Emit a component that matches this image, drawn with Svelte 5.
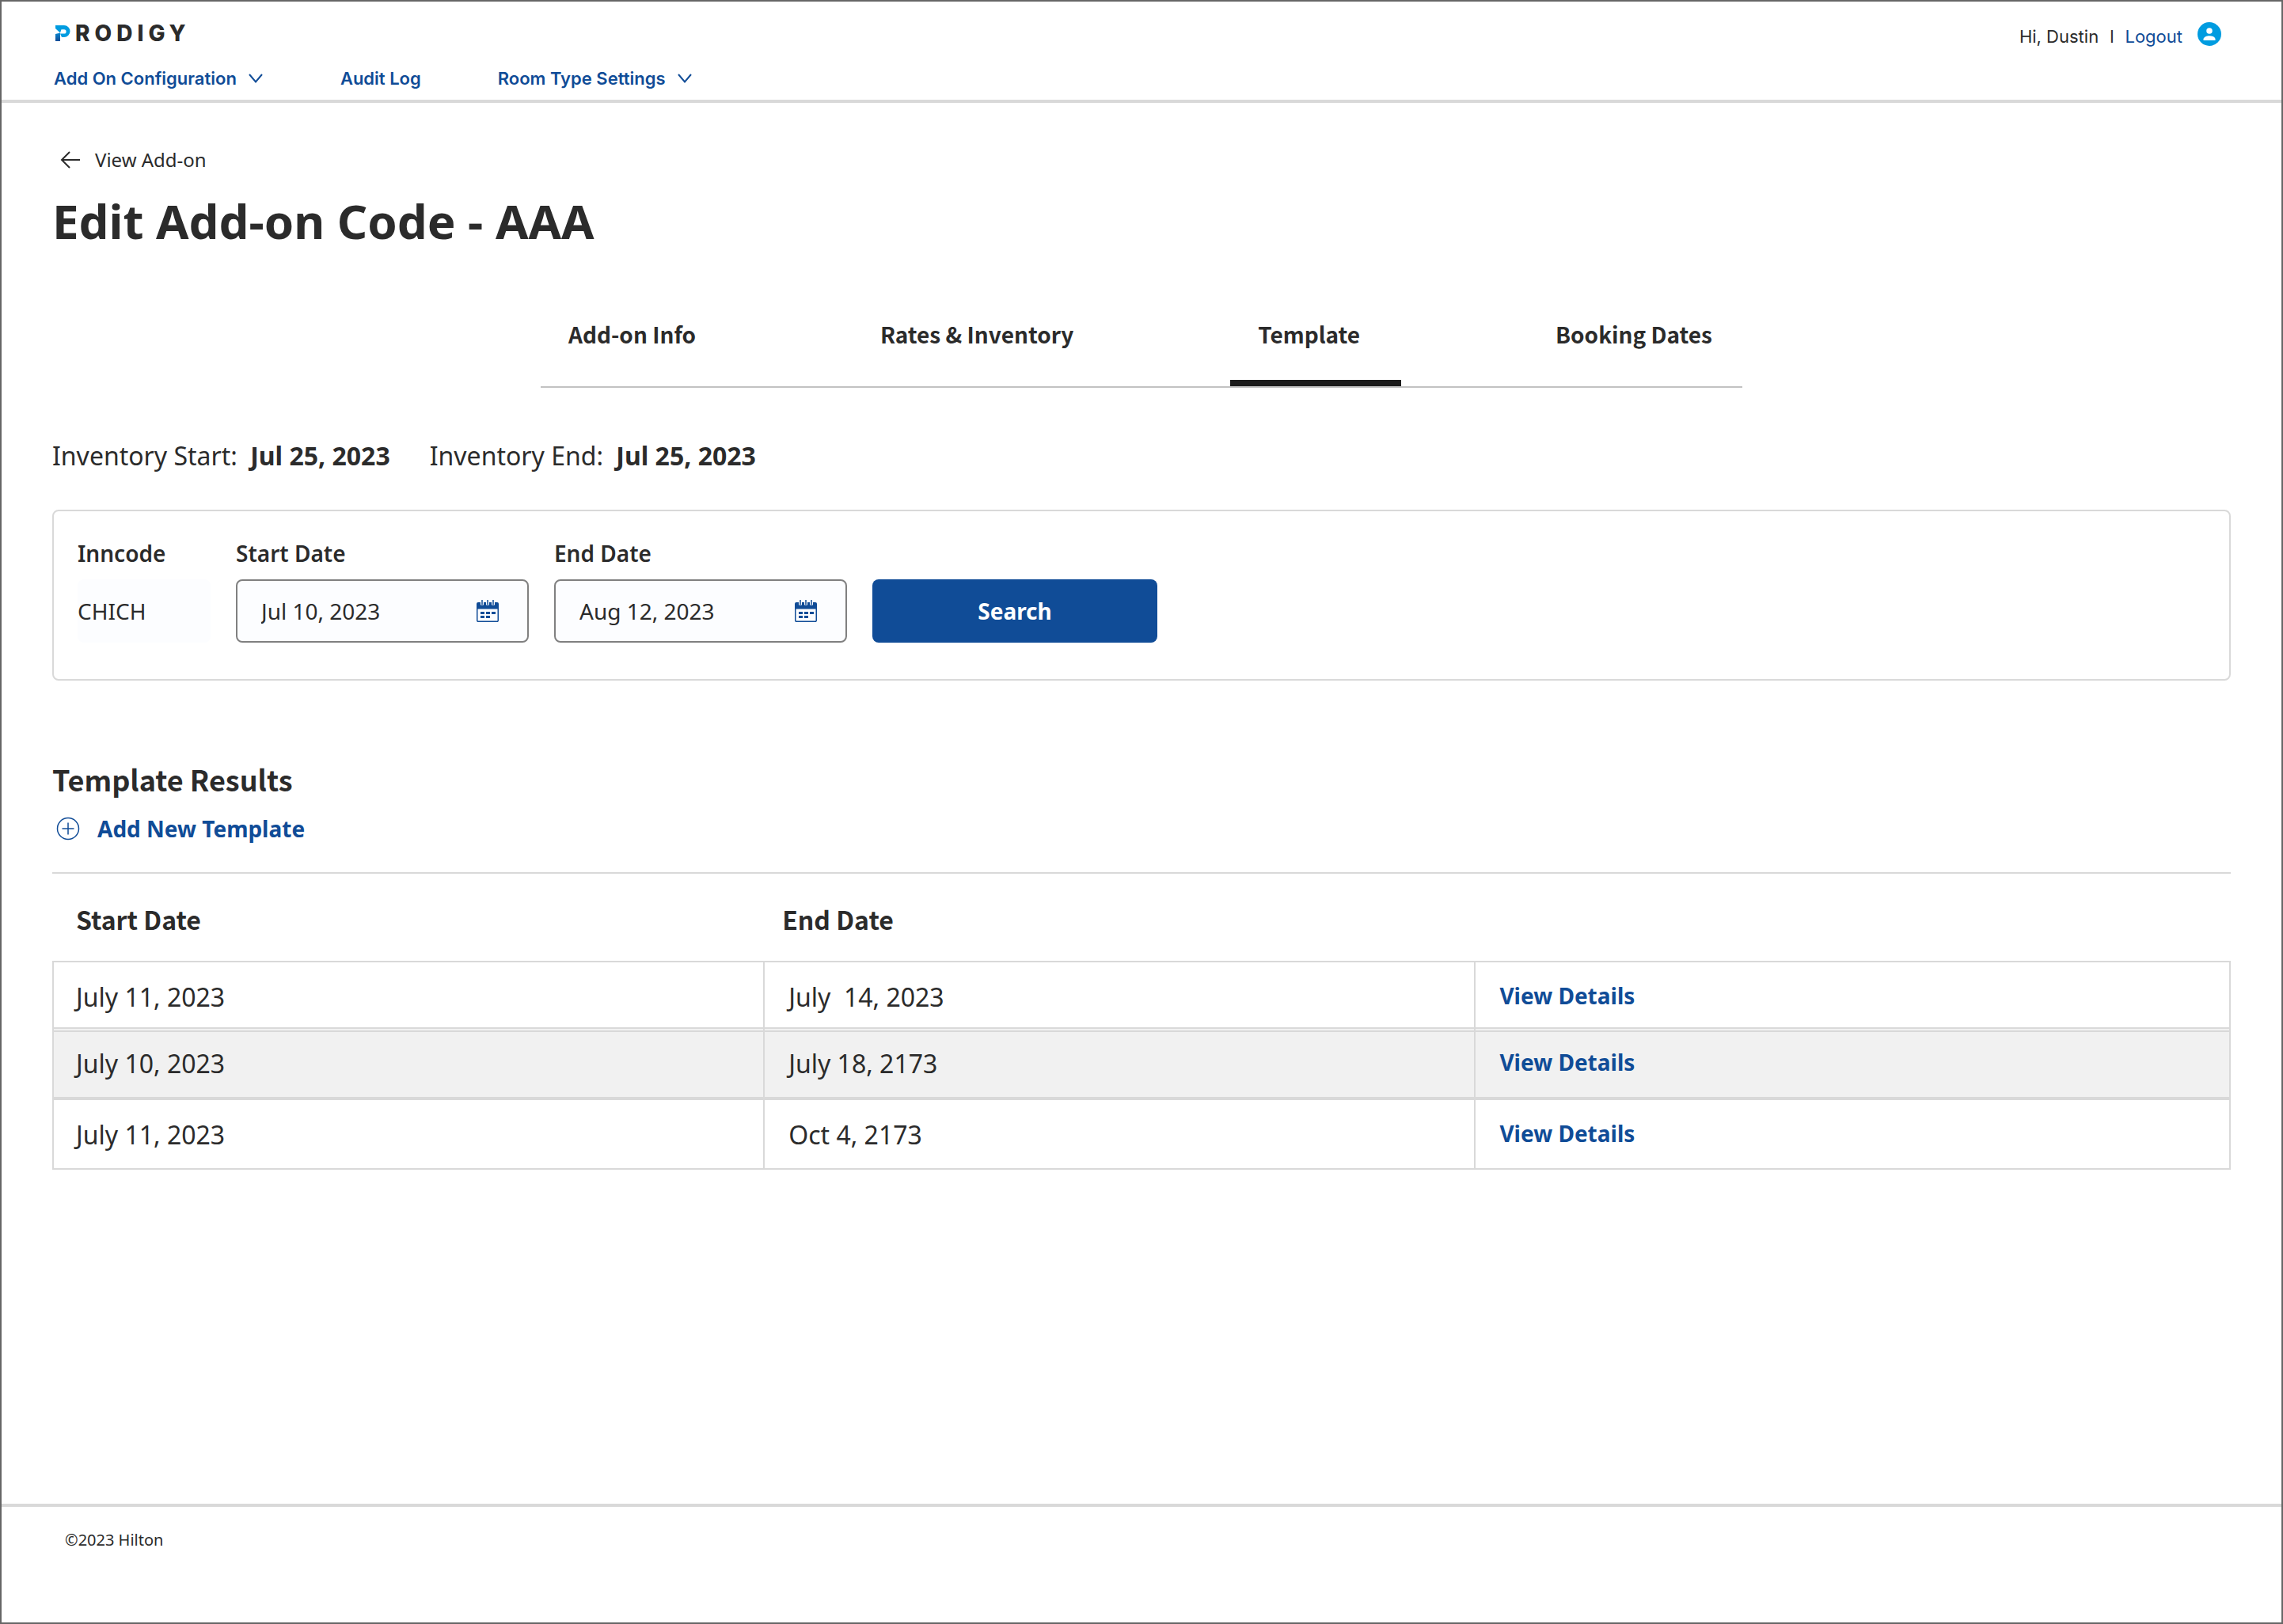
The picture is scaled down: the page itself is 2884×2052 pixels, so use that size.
<script>
  const tabs = ['Add-on Info', 'Rates & Inventory', 'Template', 'Booking Dates'];
  let active = $state('Template');
  let startDate = $state('Jul 10, 2023');
  let endDate = $state('Aug 12, 2023');
  const rows = [
    { start: 'July 11, 2023', end: 'July  14, 2023' },
    { start: 'July 10, 2023', end: 'July 18, 2173' },
    { start: 'July 11, 2023', end: 'Oct 4, 2173' }
  ];
</script>

{#snippet chevron()}
  <svg class="chevron" viewBox="0 0 20 14" aria-hidden="true"><path d="M2 2 L10 11.5 L18 2" /></svg>
{/snippet}

{#snippet calendar()}
  <svg class="calendar" viewBox="0 0 28 28" aria-hidden="true">
    <path class="solid" d="M2 3h24a2 2 0 0 1 2 2v6.500H0V5a2 2 0 0 1 2-2z" />
    <path class="line" d="M.75 11v15a1.250 1.250 0 0 0 1.250 1.250h24A1.250 1.250 0 0 0 27.250 26V11" />
    <path class="gap" d="M7 0v6.500M14 0v6.500M21 0v6.500" />
    <path class="ring" d="M7 0v6M14 0v6M21 0v6" />
    <path class="solid" d="M5 15h5v3H5zM12 15h5v3h-5zM19 15h5v3h-5zM5 20h5v3H5zM12 20h5v3h-5z" />
  </svg>
{/snippet}

<div class="page">
  <header class="top">
    <div class="brand-area">
      <a class="brand" href="#home" aria-label="Prodigy">
        <svg class="mark" viewBox="0 0 20 20" aria-hidden="true">
          <defs>
            <linearGradient id="mark-stem" x1="0" y1="0" x2="0" y2="1">
              <stop offset="0" stop-color="#0a86cf" />
              <stop offset="1" stop-color="#104c97" />
            </linearGradient>
          </defs>
          <path fill="#009ce0" d="M0 0h11a7.500 7.500 0 0 1 0 15H8l-2-4.500h5a2.600 2.600 0 0 0 0-5.200H7.500L6 9.500 0 4z" />
          <path fill="url(#mark-stem)" d="M0 11l6-1.500V20H0z" />
        </svg>
        <span class="wordmark">RODIGY</span>
      </a>
      <nav class="menu">
        <button type="button" class="menu-item">Add On Configuration {@render chevron()}</button>
        <a class="menu-item" href="#audit">Audit Log</a>
        <button type="button" class="menu-item">Room Type Settings {@render chevron()}</button>
      </nav>
    </div>
    <div class="user">
      <span>Hi, Dustin</span>
      <span class="bar">l</span>
      <a href="#logout">Logout</a>
      <svg class="avatar" viewBox="0 0 30 30" aria-hidden="true">
        <circle cx="15" cy="15" r="15" fill="#009ce0" />
        <circle cx="15" cy="11" r="3.750" fill="#fff" />
        <path fill="#fff" d="M7.500 23v-1.500c0-2.800 4.500-4.300 7.500-4.300s7.500 1.500 7.500 4.300V23z" />
      </svg>
    </div>
  </header>

  <main>
    <a class="back" href="#view">
      <svg class="arrow" viewBox="0 0 26 24" aria-hidden="true"><path d="M25 12H2M12 2L2 12l10 10" /></svg>
      View Add-on
    </a>
    <h1>Edit Add-on Code - AAA</h1>

    <div class="tabs" role="tablist">
      {#each tabs as tab}
        <button
          type="button"
          role="tab"
          class="tab"
          class:active={active === tab}
          aria-selected={active === tab}
          onclick={() => (active = tab)}>{tab}</button>
      {/each}
    </div>

    <div class="inventory">
      <p>Inventory Start: <strong>Jul 25, 2023</strong></p>
      <p>Inventory End: <strong>Jul 25, 2023</strong></p>
    </div>

    <form class="search" onsubmit={(e) => e.preventDefault()}>
      <div class="field inn">
        <label for="inncode">Inncode</label>
        <input id="inncode" type="text" value="CHICH" readonly />
      </div>
      <div class="field date">
        <label for="start">Start Date</label>
        <div class="box">
          <input id="start" type="text" bind:value={startDate} />
          {@render calendar()}
        </div>
      </div>
      <div class="field date">
        <label for="end">End Date</label>
        <div class="box">
          <input id="end" type="text" bind:value={endDate} />
          {@render calendar()}
        </div>
      </div>
      <button type="submit" class="submit">Search</button>
    </form>

    <section class="results">
      <h2>Template Results</h2>
      <a class="add" href="#new">
        <svg class="plus" viewBox="0 0 30 30" aria-hidden="true">
          <circle cx="15" cy="15" r="13.500" />
          <path d="M15 7.500v15M7.500 15h15" />
        </svg>
        Add New Template
      </a>
      <table>
        <thead>
          <tr>
            <th scope="col">Start Date</th>
            <th scope="col">End Date</th>
            <td></td>
          </tr>
        </thead>
        <tbody>
          {#each rows as row}
            <tr>
              <td>{row.start}</td>
              <td>{row.end}</td>
              <td class="action"><a href="#details">View Details</a></td>
            </tr>
          {/each}
        </tbody>
      </table>
    </section>
  </main>

  <footer>©2023 Hilton</footer>
</div>

<style>
  :global(body) {
    margin: 0;
    background: #fff;
  }
  .page {
    --ink: #2b2b2b;
    --blue: #104c97;
    --line: #d9d9d9;
    --head: 'Noto Sans CJK SC', 'Noto Sans', sans-serif;
    --nav: Inter, 'Open Sans', sans-serif;
    box-sizing: border-box;
    display: flex;
    flex-direction: column;
    min-height: 100vh;
    border: 2px solid #666;
    color: var(--ink);
    font-family: 'Noto Sans', sans-serif;
    font-size: 28px;
    line-height: 40px;
  }
  a {
    color: var(--blue);
    text-decoration: none;
  }
  button,
  input {
    font: inherit;
    color: inherit;
    background: none;
    border: 0;
    margin: 0;
    padding: 0;
    min-width: 0;
  }
  button {
    cursor: pointer;
  }
  svg {
    flex: none;
    fill: none;
  }
  h1,
  h2,
  p {
    margin: 0;
  }

  .top {
    display: flex;
    justify-content: space-between;
    align-items: flex-start;
    padding: 26px 76px 11px 66px;
    border-bottom: 4px solid var(--line);
    font-family: var(--nav);
  }
  .brand {
    display: flex;
    align-items: center;
    gap: 5px;
    height: 28px;
    color: var(--ink);
  }
  .mark {
    width: 20px;
    height: 20px;
    margin-left: 2px;
  }
  .wordmark {
    font-size: 28px;
    font-weight: 800;
    line-height: 28px;
    letter-spacing: 6px;
  }
  .menu {
    display: flex;
    gap: 97px;
    margin-top: 27px;
  }
  .menu-item {
    display: flex;
    align-items: center;
    gap: 14px;
    color: var(--blue);
    font-size: 22px;
    font-weight: 600;
    line-height: 32px;
  }
  .chevron {
    width: 20px;
    height: 14px;
    stroke: var(--blue);
    stroke-width: 2;
  }
  .user {
    display: flex;
    align-items: flex-start;
    gap: 14px;
    font-size: 22px;
    line-height: 36px;
  }
  .avatar {
    width: 30px;
    height: 30px;
    margin-left: 5px;
  }

  main {
    flex: 1;
    padding: 56px 64px;
  }
  .back {
    display: flex;
    align-items: center;
    gap: 18px;
    width: max-content;
    padding-left: 10px;
    color: var(--ink);
    font-size: 24px;
    line-height: 32px;
  }
  .arrow {
    width: 26px;
    height: 24px;
    stroke: var(--ink);
    stroke-width: 2;
  }
  h1 {
    margin-top: 25px;
    font-size: 60px;
    font-weight: 700;
    line-height: 72px;
  }

  .tabs {
    display: flex;
    justify-content: space-between;
    max-width: 1518px;
    margin: 87px auto 0;
    border-bottom: 2px solid #c2c2c2;
  }
  .tab {
    padding: 0 38px 38px 35px;
    border-bottom: 8px solid transparent;
    font-family: var(--head);
    font-weight: 700;
  }
  .tab.active {
    padding-right: 52px;
    border-color: #1c1c1c;
  }

  .inventory {
    display: flex;
    gap: 50px;
    margin-top: 62px;
    font-size: 32px;
    line-height: 48px;
  }
  .inventory strong {
    margin-left: 8px;
  }

  .search {
    display: flex;
    align-items: flex-end;
    gap: 32px;
    margin-top: 44px;
    padding: 33px 30px 46px;
    border: 2px solid var(--line);
    border-radius: 8px;
  }
  .field {
    display: flex;
    flex-direction: column;
    gap: 13px;
  }
  .field label {
    font-weight: 600;
  }
  .inn {
    width: 168px;
  }
  .inn input {
    height: 80px;
    border-radius: 8px;
    background: #fcfdff;
  }
  .date {
    width: 370px;
  }
  .box {
    box-sizing: border-box;
    display: flex;
    align-items: center;
    height: 80px;
    padding: 0 36px 0 30px;
    border: 2px solid #808080;
    border-radius: 8px;
    background: #fcfdff;
  }
  .box input {
    flex: 1;
  }
  .calendar {
    width: 28px;
    height: 28px;
  }
  .calendar .solid {
    fill: var(--blue);
  }
  .calendar .line,
  .calendar .ring {
    stroke: var(--blue);
    stroke-width: 1.500;
  }
  .calendar .gap {
    stroke: #fcfdff;
    stroke-width: 4;
  }
  .submit {
    width: 360px;
    height: 80px;
    border-radius: 8px;
    background: var(--blue);
    color: #fff;
    font-weight: 700;
  }

  .results {
    margin-top: 100px;
  }
  h2 {
    font-family: var(--head);
    font-size: 36px;
    font-weight: 700;
    line-height: 48px;
  }
  .add {
    display: flex;
    align-items: center;
    gap: 22px;
    width: max-content;
    margin-top: 19px;
    padding-left: 5px;
    font-weight: 700;
  }
  .plus {
    width: 30px;
    height: 30px;
    stroke: var(--blue);
    stroke-width: 1.500;
  }
  table {
    width: 100%;
    margin-top: 35px;
    border-top: 2px solid var(--line);
    border-collapse: separate;
    border-spacing: 0;
    table-layout: fixed;
    font-size: 32px;
  }
  th {
    padding: 37px 22px 33px;
    font-family: var(--head);
    font-weight: 700;
    text-align: left;
  }
  th:first-child {
    width: 32.71%;
    box-sizing: border-box;
    padding-left: 30px;
  }
  th:nth-child(2) {
    width: 32.64%;
    box-sizing: border-box;
  }
  tbody td {
    padding: 24px 30px 22px;
    border-right: 2px solid var(--line);
    border-bottom: 2px solid var(--line);
    vertical-align: top;
    white-space: pre;
  }
  tbody td:first-child {
    padding-left: 28px;
    border-left: 2px solid var(--line);
  }
  tbody tr:first-child td {
    padding-bottom: 18px;
    border-top: 2px solid var(--line);
  }
  tbody tr:nth-child(2) td {
    border-bottom-width: 4px;
    background: linear-gradient(var(--line), var(--line)) 0 2px / 100% 2px no-repeat #f1f1f1;
  }
  tbody .action {
    font-size: 28px;
    font-weight: 700;
    line-height: 36px;
  }

  footer {
    height: 106px;
    padding: 28px 80px 12px;
    border-top: 4px solid var(--line);
    font-size: 20px;
    line-height: 28px;
  }
</style>
